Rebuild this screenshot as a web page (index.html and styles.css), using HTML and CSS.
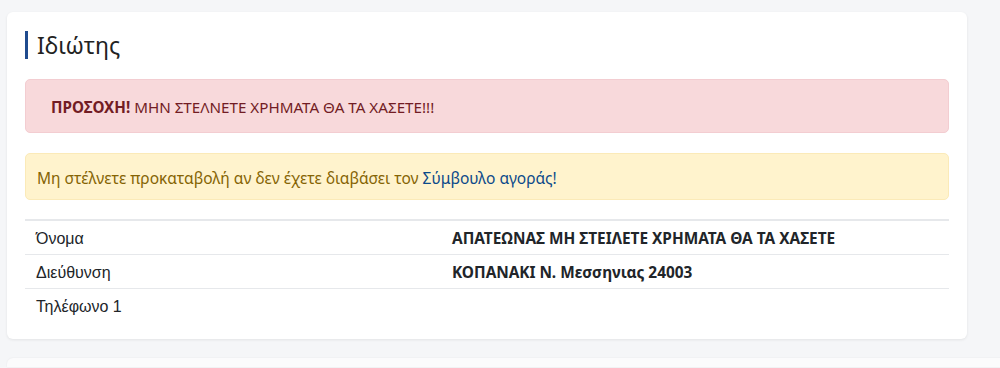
FILE: index.html
```html
<!DOCTYPE HTML>
<html>
<head>
	<meta charset="utf-8">
	<link rel="stylesheet" href="styles.css">
</head>
<body>

	<div class="card">
		<h2 class="title">Ιδιώτης</h2>

		<div class="alert alert-danger">
			<b>ΠΡΟΣΟΧΗ!</b> ΜΗΝ ΣΤΕΛΝΕΤΕ ΧΡΗΜΑΤΑ ΘΑ ΤΑ ΧΑΣΕΤΕ!!!
		</div>

		<div class="alert alert-warning">
			Μη στέλνετε προκαταβολή αν δεν έχετε διαβάσει τον <a href="#">Σύμβουλο αγοράς!</a>
		</div>

		<table class="info">
			<tr>
				<td class="label">Όνομα</td>
				<td class="value">ΑΠΑΤΕΩΝΑΣ ΜΗ ΣΤΕΙΛΕΤΕ ΧΡΗΜΑΤΑ ΘΑ ΤΑ ΧΑΣΕΤΕ</td>
			</tr>
			<tr>
				<td class="label">Διεύθυνση</td>
				<td class="value">ΚΟΠΑΝΑΚΙ Ν. Μεσσηνιας 24003</td>
			</tr>
			<tr class="last">
				<td class="label">Τηλέφωνο 1</td>
				<td class="value"></td>
			</tr>
		</table>
	</div>

	<div class="card next"></div>

</body>
</html>
```

FILE: styles.css
```css
html, body {
	height: 368px;
	overflow: hidden;
}

body {
	margin: 0;
	padding: 12px 33px 0 7px;
	background: #f5f6f8;
	font-family: "Noto Sans", "Liberation Sans", sans-serif;
	color: #212529;
	box-sizing: border-box;
}

.card {
	background: #fff;
	border-radius: 6px;
	box-shadow: 0 1px 3px rgba(0,0,0,0.08);
	padding: 19px 18px 18px 18px;
}

/* next card is cut off by the bottom of the window */
.card.next {
	margin-top: 19px;
	margin-right: -40px;
	height: 9px;
	padding: 0;
	background: #fbfbfc;
	border-radius: 6px 0 0 0;
	box-shadow: 0 0 2px rgba(0,0,0,0.07);
}

.title {
	margin: 0 0 20px 0;
	border-left: 3px solid #1f4b8e;
	padding-left: 9px;
	font-size: 23px;
	font-weight: 400;
	line-height: 28px;
	color: #222;
}

.alert {
	border-radius: 5px;
	border: 1px solid transparent;
	font-size: 15.2px;
}

.alert-danger {
	background: #f8d9db;
	border-color: #f3cdd1;
	color: #721c24;
	padding: 18px 25px 16px 25px;
	line-height: 18px;
	margin-bottom: 20px;
}

.alert-danger b {
	font-weight: 700;
}

.alert-warning {
	background: #fff3cd;
	border-color: #fbeab8;
	color: #856404;
	font-size: 15.5px;
	padding: 15px 11px 12px 11px;
	line-height: 18px;
	margin-bottom: 19px;
}

.alert-warning a {
	color: #0c4a8a;
	text-decoration: none;
}

.info {
	width: 100%;
	border-collapse: collapse;
	font-size: 15.4px;
}

.info td {
	border-top: 2px solid #e6e8eb;
	padding: 9px 11px 6px 11px;
	height: 18px;
	line-height: 18px;
}

.info tr:nth-child(2) td {
	border-top-width: 1px;
}

.info tr.last td {
	border-top: 1px solid #e6e8eb;
	padding-bottom: 5px;
}

.info .label {
	width: 394px;
	font-family: "Liberation Sans", Arial, sans-serif;
	font-size: 16px;
}

.info .value {
	font-weight: 700;
}
```
